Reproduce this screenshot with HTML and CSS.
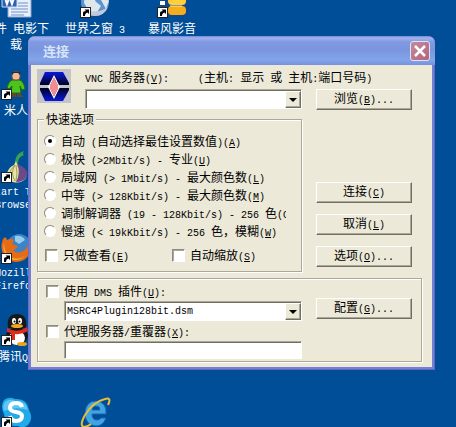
FILE: index.html
```html
<!DOCTYPE html>
<html lang="zh-CN">
<head>
  <meta charset="UTF-8">
  <meta name="viewport" content="width=device-width, initial-scale=1.0">
  <title>连接</title>
  <link rel="stylesheet" href="styles.css">
</head>
<body>

<svg class="defs" width="0" height="0" aria-hidden="true">
  <symbol id="shortcut" viewBox="0 0 32 32">
    <rect x="1.500" y="21.500" width="10" height="10" fill="#fff" stroke="#222"/>
    <path d="M4 29V27Q4 25 7 25L5.500 23.500H10V28L8.500 26.500Q6 27 6 30H4z" fill="#000"/>
  </symbol>
</svg>

<main class="desktop">

  <!-- desktop icons -->
  <div class="item col1 row1">
    <svg viewBox="0 0 32 32">
      <path d="M8 0H31V31H8z" fill="#e9f0fb" stroke="#8ba4cf"/>
      <path d="M18 17H28M18 20H28M11 23H28M11 26H28M11 29H24" stroke="#6f91cb"/>
      <path d="M2 6H17V21H2z" fill="#2f62b0" stroke="#c9daf3"/>
      <path d="M4 9L7 18L9.500 11L12 18L15 9" fill="none" stroke="#fff" stroke-width="2"/>
    </svg>
    <p><span class="zh">软件</span> <span class="zh">电影下</span><br><span class="zh">载</span></p>
  </div>

  <div class="item col2 row1">
    <svg viewBox="0 0 32 32">
      <circle cx="16" cy="16" r="14" fill="#5d93ce"/>
      <path d="M6 7Q14 2 20 8L16 15L22 20L17 28Q9 25 5 17zM23 6L30 15L27 23L22 14z" fill="#dce8ee"/>
      <path d="M3 21Q15 30 29 21Q25 30 16 30Q8 30 3 21" fill="#bfcbd9"/>
      <use href="#shortcut"/>
    </svg>
    <p><span class="zh">世界之窗</span> 3</p>
  </div>

  <div class="item col3 row1">
    <svg viewBox="0 0 32 32">
      <rect x="4" y="2" width="27" height="28" rx="3" fill="#14478c"/>
      <rect x="12" y="11" width="18" height="8" rx="4" fill="#ffcf3c"/>
      <rect x="12" y="20" width="18" height="9" rx="4" fill="#f5ad1c"/>
      <path d="M14 20H26" stroke="#fff0a0"/>
      <rect x="4" y="15" width="5" height="4" fill="#fff"/>
      <use href="#shortcut"/>
    </svg>
    <p><span class="zh">暴风影音</span></p>
  </div>

  <div class="item col1 row2">
    <svg viewBox="0 0 32 32">
      <path d="M12 23H16V29H10V27zM17 23H21V27L24 29H17z" fill="#6b4430"/>
      <path d="M12 12H20Q24 14 25 21L22 22L20 18L21 25H11L12 18L9 21L7 19Q9 13 12 12z" fill="#4fc31d" stroke="#216c12"/>
      <rect x="12" y="4" width="8" height="8" rx="3" fill="#edbd97" stroke="#80543a"/>
      <path d="M12 7V4H20V7L18 5H14z" fill="#3c2a22"/>
      <use href="#shortcut"/>
    </svg>
    <p><span class="zh">米人</span></p>
  </div>

  <div class="item col1 row3">
    <svg viewBox="0 0 32 32">
      <path d="M15 11Q15 3 24 0Q22 3 24 4Q18 6 18 12z" fill="#38a34c"/>
      <path d="M16 10Q17 14 22 16Q28 20 26 27Q21 33 13 31Q5 29 7 22Q9 16 14 14z" fill="#e9e5a5"/>
      <path d="M17 13Q29 18 27 25Q24 31 16 31Q21 22 17 13z" fill="#6c4a87"/>
      <path d="M15 14Q10 22 15 30M15 14Q6 23 10 29M16 14Q18 23 16 30" fill="none" stroke="#a09b5c"/>
      <use href="#shortcut"/>
    </svg>
    <p>Start Tor<br>Browser</p>
  </div>

  <div class="item col1 row4">
    <svg viewBox="0 0 32 32">
      <circle cx="19" cy="14" r="12" fill="#3c83c9"/>
      <path d="M15 4Q22 3 25 8L19 12L15 9z" fill="#96cce9"/>
      <path d="M3 7Q6 3 7 8Q11 6 14 8L12 12L18 14Q16 18 13 18Q17 23 23 19Q29 16 28 8Q35 20 24 28Q13 33 5 25Q-1 17 3 7z" fill="#e66b17"/>
      <path d="M4 11Q4 20 10 25Q18 29 25 24Q16 32 7 24Q2 18 4 11" fill="#f8b434"/>
      <use href="#shortcut"/>
    </svg>
    <p>Mozilla<br>Firefox</p>
  </div>

  <div class="item col1 row5">
    <svg viewBox="0 0 32 32">
      <ellipse cx="17" cy="22" rx="11" ry="9" fill="#151515"/>
      <ellipse cx="17" cy="24" rx="8" ry="7" fill="#fff"/>
      <path d="M8 14Q6 0 17 0Q28 0 26 14z" fill="#181818"/>
      <ellipse cx="14" cy="7" rx="2" ry="3" fill="#fff"/>
      <ellipse cx="20" cy="7" rx="2" ry="3" fill="#fff"/>
      <circle cx="14.500" cy="7.500" r="1" fill="#000"/>
      <circle cx="19.500" cy="7.500" r="1" fill="#000"/>
      <ellipse cx="17" cy="12" rx="6" ry="2" fill="#f4a51d"/>
      <path d="M7 14Q17 20 27 13L28 17Q22 21 15 20V26H11V19L7 18z" fill="#e02a20"/>
      <ellipse cx="22" cy="30" rx="5" ry="2" fill="#f2a11c"/>
      <use href="#shortcut"/>
    </svg>
    <p><span class="zh">腾讯</span>QQ</p>
  </div>

  <div class="item col1 row6">
    <svg viewBox="0 0 32 32">
      <path d="M4 4Q9 0 15 3Q27 2 29 14Q34 23 28 29Q23 33 18 30Q6 31 4 18Q0 10 4 4z" fill="#22a9e7"/>
      <path d="M5 6Q10 2 15 5Q26 4 28 14Q15 10 4 15Q2 10 5 6z" fill="#5cc8f4"/>
      <path d="M22 11Q21 7 16 7Q10 7 10 12Q10 15 16 16Q22 17 22 20Q22 25 16 25Q11 25 10 20" fill="none" stroke="#fff" stroke-width="4"/>
      <use href="#shortcut"/>
    </svg>
  </div>

  <div class="item col2 row6">
    <svg viewBox="0 0 32 32">
      <path d="M27 18H13Q13 24 18 24Q21 24 22 22H27Q24 30 17 30Q6 29 6 17Q7 5 17 5Q28 6 27 18zM13 14H21Q21 10 17 10Q13 10 13 14z" fill="#41a5e4" stroke="#1a65ae" fill-rule="evenodd"/>
      <path d="M29 9Q33 1 26 3Q14 6 6 19Q0 30 5 31Q8 31 12 28" fill="none" stroke="#e8bd38" stroke-width="2"/>
    </svg>
  </div>

  <!-- connect dialog -->
  <section class="window">
    <header class="titlebar">
      <h1>连接</h1>
      <button type="button" class="close" aria-label="关闭">
        <svg viewBox="0 0 18 18"><path d="M4 4L14 14M14 4L4 14" stroke="#fff" stroke-width="2.500"/></svg>
      </button>
    </header>

    <form class="content">
      <div class="server">
        <svg class="logo" viewBox="0 0 34 34">
          <defs>
            <linearGradient id="up" x1="0" y1="0" x2="0" y2="1">
              <stop offset="0" stop-color="#0818e0"/><stop offset="1" stop-color="#000020"/>
            </linearGradient>
            <linearGradient id="down" x1="0" y1="0" x2="0" y2="1">
              <stop offset="0" stop-color="#000020"/><stop offset="1" stop-color="#0818e0"/>
            </linearGradient>
          </defs>
          <rect width="34" height="34" fill="#c3c3c8"/>
          <path d="M8 3H26L32 14V16H3V14z" fill="url(#up)"/>
          <path d="M3 19H32V21L26 32H8L3 21z" fill="url(#down)"/>
          <path d="M17 6L23 18L17 30L11 18z" fill="#fff"/>
          <path d="M16 10H18M15 12H19M14 14H20M13 16H21M13 18H21M13 20H21M14 22H20M15 24H19M16 26H18" stroke="#e01c28"/>
        </svg>
        <div class="server_label">
          <label for="server"><span>VNC <span class="zh">服务器</span>(<u>V</u>):</span></label>
          <span>(<span class="zh">主机</span>: <span class="zh">显示</span> <span class="zh">或</span> <span class="zh">主机</span>:<span class="zh">端口号码</span>)</span>
        </div>
        <div class="combo">
          <select id="server"><option></option></select>
          <span class="arrow"></span>
        </div>
        <button type="button" class="btn"><span class="zh">浏览</span>(<u>B</u>)...</button>
      </div>

      <div class="middle">
        <fieldset class="quick">
          <legend><span class="zh">快速选项</span></legend>
          <label><input type="radio" name="speed" checked><span><span class="zh">自动</span> (<span class="zh">自动选择最佳设置数值</span>)(<u>A</u>)</span></label>
          <label><input type="radio" name="speed"><span><span class="zh">极快</span> (&gt;2Mbit/s) - <span class="zh">专业</span>(<u>U</u>)</span></label>
          <label><input type="radio" name="speed"><span><span class="zh">局域网</span> (&gt; 1Mbit/s) - <span class="zh">最大颜色数</span>(<u>L</u>)</span></label>
          <label><input type="radio" name="speed"><span><span class="zh">中等</span> (&gt; 128Kbit/s) - <span class="zh">最大颜色数</span>(<u>M</u>)</span></label>
          <label><input type="radio" name="speed"><span><span class="zh">调制解调器</span> (19 - 128Kbit/s) - 256 <span class="zh">色</span>(O)</span></label>
          <label><input type="radio" name="speed"><span><span class="zh">慢速</span> (&lt; 19kKbit/s) - 256 <span class="zh">色，模糊</span>(<u>W</u>)</span></label>
          <div class="checks">
            <label><input type="checkbox"><span><span class="zh">只做查看</span>(<u>E</u>)</span></label>
            <label><input type="checkbox"><span><span class="zh">自动缩放</span>(<u>S</u>)</span></label>
          </div>
        </fieldset>

        <div class="actions">
          <button type="submit" class="btn"><span class="zh">连接</span>(<u>C</u>)</button>
          <button type="button" class="btn"><span class="zh">取消</span>(<u>L</u>)</button>
          <button type="button" class="btn"><span class="zh">选项</span>(<u>O</u>)...</button>
        </div>
      </div>

      <fieldset class="plugin">
        <div class="plugin_fields">
          <label><input type="checkbox"><span><span class="zh">使用</span> DMS <span class="zh">插件</span>(<u>U</u>):</span></label>
          <div class="combo">
            <select aria-label="DMS 插件"><option>MSRC4Plugin128bit.dsm</option></select>
            <span class="arrow"></span>
          </div>
          <label><input type="checkbox"><span><span class="zh">代理服务器</span>/<span class="zh">重覆器</span>(<u>X</u>):</span></label>
          <input type="text" class="proxy" aria-label="代理服务器/重覆器">
        </div>
        <button type="button" class="btn"><span class="zh">配置</span>(<u>G</u>)...</button>
      </fieldset>
    </form>
  </section>

</main>

</body>
</html>
```

FILE: styles.css
```css
*{
  padding: 0;
  margin: 0;
  box-sizing: border-box;
}

/* latin text is half as wide as a chinese character */
body, button, input, select{
  font-family: "Liberation Mono", "Noto Sans CJK SC", monospace;
  font-size: 10px;
  color: #000;
}

.zh{
  font-family: "Noto Sans CJK SC", sans-serif;
  font-size: 12px;
  line-height: 16px;
}

.defs{
  position: absolute;
}

.desktop{
  position: relative;
  height: 100vh;
  overflow: hidden;
  background: #004e98;
}

/* desktop icons */
.item{
  position: absolute;
  width: 80px;
  text-align: center;
  color: #fff;
}
.item svg{
  display: block;
  width: 32px;
  height: 32px;
  margin: 0 auto 3px;
}
.item p{
  line-height: 13px;
  white-space: nowrap;
}
.item .zh{
  line-height: 13px;
}
.col1{ left: -24px; }
.col2{ left: 55px; }
.col3{ left: 132px; }
.row1{ top: -14px; }
.row2{ top: 68px; }
.row3{ top: 151px; }
.row4{ top: 232px; }
.row5{ top: 314px; }
.row6{ top: 396px; }

/* window frame */
.window{
  position: absolute;
  top: 36px;
  left: 28px;
  right: 21px;
  padding: 0 3px 3px;
  border-radius: 7px 7px 0 0;
  background: #7580d4;
  box-shadow: inset 1px 0 #6973c4, inset -1px -1px #6068b8;
}
.titlebar{
  display: flex;
  align-items: center;
  justify-content: space-between;
  height: 29px;
  margin: 0 -3px;
  padding: 0 5px 0 15px;
  border-radius: 7px 7px 0 0;
  background: linear-gradient(#7589d5, #a0b4ee 2px, #8099e2 6px, #7a96df 14px, #82a5e9 24px, #7890dc);
}
.titlebar h1{
  font: bold 13px "Noto Sans CJK SC", sans-serif;
  color: #d8e4f8;
}
.close{
  width: 20px;
  height: 20px;
  border: 1px solid #dfe3f6;
  border-radius: 3px;
  background: linear-gradient(135deg, #c58b9e, #b0657c);
}
.close svg{
  display: block;
}

.content{
  padding: 4px 10px 5px 6px;
  background: #ece9d8;
}

/* server row */
.server{
  display: grid;
  grid-template-columns: 34px 1fr 96px;
  grid-template-rows: 16px 21px;
  gap: 4px 14px;
  align-items: start;
  padding-right: 10px;
}
.logo{
  grid-row: span 2;
  width: 34px;
  height: 34px;
}
.server_label{
  grid-column: span 2;
  display: flex;
  gap: 29px;
  line-height: 16px;
  white-space: nowrap;
}

/* controls */
.combo{
  display: flex;
  height: 20px;
  border: 1px solid;
  border-color: #aca899 #fff #fff #aca899;
  background: #fff;
  box-shadow: inset 1px 1px #716f64;
}
.combo select{
  flex: 1;
  min-width: 0;
  padding-left: 2px;
  border: none;
  outline: none;
  background: transparent;
  appearance: none;
}
.arrow{
  display: flex;
  align-items: center;
  justify-content: center;
  width: 16px;
  margin: 1px 0 0;
  border: 1px solid;
  border-color: #fff #716f64 #716f64 #fff;
  background: #ece9d8;
  box-shadow: inset -1px -1px #aca899;
}
.arrow::before{
  content: "";
  border: 4px solid transparent;
  border-top-color: #000;
  border-bottom: none;
}
.btn{
  height: 21px;
  border: 1px solid;
  border-color: #fff #716f64 #716f64 #fff;
  background: #ece9d8;
  box-shadow: inset -1px -1px #aca899;
  line-height: 16px;
  white-space: nowrap;
}
.proxy{
  height: 18px;
  padding: 0 3px;
  border: 1px solid;
  border-color: #aca899 #fff #fff #aca899;
  outline: none;
  background: #fff;
  box-shadow: inset 1px 1px #716f64;
}
label{
  display: flex;
  align-items: center;
  gap: 5px;
  overflow: hidden;
  white-space: nowrap;
}
input[type=radio], input[type=checkbox]{
  flex: none;
  display: flex;
  align-items: center;
  justify-content: center;
  appearance: none;
  width: 12px;
  height: 12px;
  border: 1px solid;
  border-color: #8d8a7e #fff #fff #8d8a7e;
  background: #fff;
}
input[type=radio]{
  border-radius: 50%;
}
input[type=checkbox]{
  width: 13px;
  height: 13px;
  box-shadow: inset 1px 1px #aca899;
}
input[type=radio]:checked::before{
  content: "";
  width: 4px;
  height: 4px;
  border-radius: 50%;
  background: #000;
}

/* group boxes */
fieldset{
  min-width: 0;
  border: 1px solid #aca899;
  box-shadow: 1px 1px #fff, inset 1px 1px #fff;
}
.middle{
  display: grid;
  grid-template-columns: 1fr 96px;
  gap: 14px;
  margin-top: 2px;
  padding-right: 10px;
}
.quick{
  padding: 6px 15px 7px 6px;
}
.quick legend{
  height: 14px;
  padding: 0 2px;
  background: #ece9d8;
  line-height: 14px;
}
.quick legend .zh{
  line-height: 14px;
}
.quick label{
  height: 18px;
}
.checks{
  display: grid;
  grid-template-columns: 127px 1fr;
  margin-top: 6px;
  padding-left: 1px;
}
.actions{
  display: flex;
  flex-direction: column;
  justify-content: flex-end;
  gap: 11px;
  padding-bottom: 5px;
}
.plugin{
  display: flex;
  gap: 14px;
  margin-top: 6px;
  padding: 4px 9px 2px 8px;
}
.plugin_fields{
  flex: 1;
  display: flex;
  flex-direction: column;
  gap: 2px;
}
.plugin_fields label{
  height: 16px;
}
.plugin_fields .combo, .proxy{
  margin-left: 18px;
}
.plugin .btn{
  width: 96px;
  margin-top: 15px;
}
```
